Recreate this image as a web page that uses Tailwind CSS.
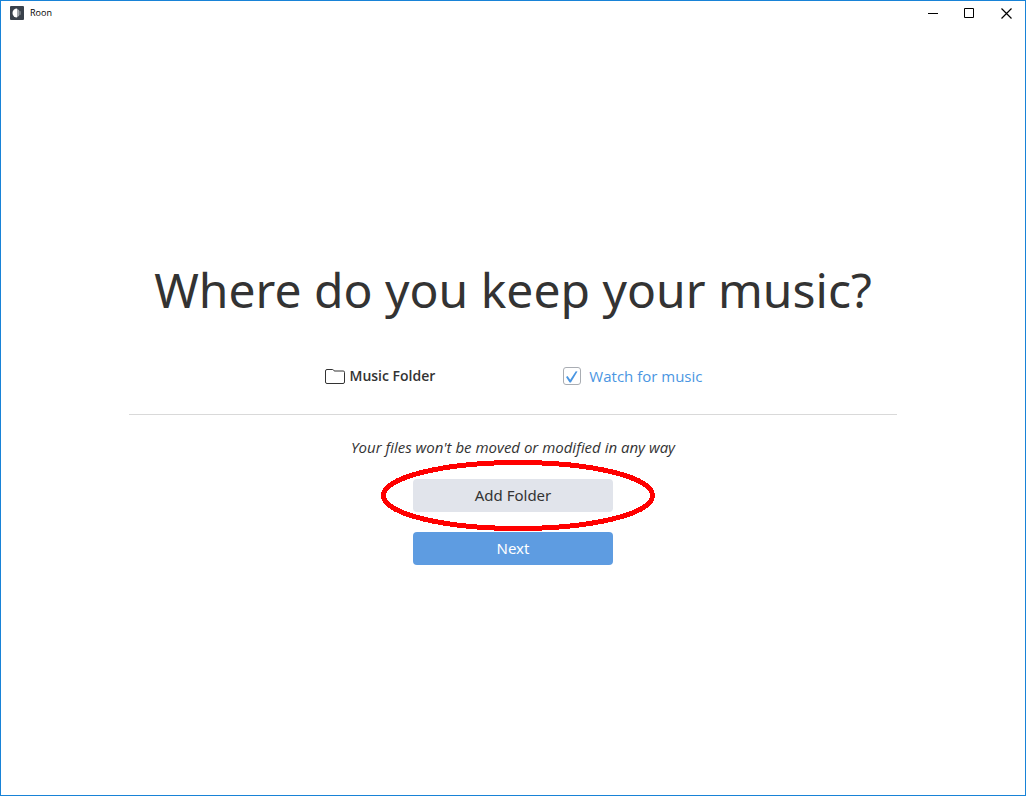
<!DOCTYPE html>
<html lang="en">
  <head>
    <meta charset="UTF-8" />
    <meta name="viewport" content="width=device-width, initial-scale=1.0" />
    <title>Roon</title>

    <script src="https://cdn.jsdelivr.net/npm/@tailwindcss/browser@4"></script>
  </head>
  <body
    class="flex min-h-screen flex-col border border-[#1883d7] bg-white font-['Noto_Sans','Open_Sans',sans-serif] text-[15px] text-[#333333]"
  >
    <!-- Title bar -->
    <header class="flex h-6 items-center justify-between pl-2 text-black">
      <div class="flex items-center gap-[5px]">
        <svg class="size-4" viewBox="0 0 16 16" aria-hidden="true">
          <rect x="1" y="1" width="14" height="14" rx="1" fill="#39414b" />
          <path d="M8 3.5v9a4.5 4.5 0 0 1 0-9z" fill="#ffffff" />
          <path d="M8 3.5v9l1-1v-7zM9 4.5l1 .5v6l-1 .5zM10.5 5.5l1 1v3l-1 1z" fill="#a4a9ae" />
        </svg>
        <span class="font-['Open_Sans',sans-serif] text-[9px]">Roon</span>
      </div>
      <div class="flex h-full">
        <button type="button" aria-label="Minimize" class="flex w-[37px] items-center justify-center hover:bg-gray-200">
          <svg class="size-[11px]" viewBox="0 0 11 11" fill="none" stroke="currentColor">
            <path d="M1 5.5h10" />
          </svg>
        </button>
        <button type="button" aria-label="Maximize" class="flex w-[37px] items-center justify-center hover:bg-gray-200">
          <svg class="size-[11px]" viewBox="0 0 11 11" fill="none" stroke="currentColor">
            <path d="M.5.5h9v9h-9z" />
          </svg>
        </button>
        <button type="button" aria-label="Close" class="flex w-[37px] items-center justify-center hover:bg-red-500">
          <svg class="size-[11px]" viewBox="0 0 11 11" fill="none" stroke="currentColor" stroke-width="1.2">
            <path d="M.5.5l10 10M10.5.5l-10 10" />
          </svg>
        </button>
      </div>
    </header>

    <main class="flex flex-1 flex-col items-center justify-center">
      <h1 class="text-center text-5xl leading-[68px]">Where do you keep your music?</h1>

      <div class="mt-10 flex w-3/4 items-center justify-center gap-32 border-b border-[#d9d9d9] pb-[26px]">
        <div class="flex items-center gap-1">
          <svg class="size-[22px]" viewBox="0 0 22 22" fill="none" stroke="#333333" aria-hidden="true">
            <path d="M1.5 17V6q0-1.500 1.500-1.500h5.500q.8 0 1.200.7l.5.8h9q1.300 0 1.300 1.300V17q0 1.500-1.500 1.500H3q-1.500 0-1.500-1.500z" />
          </svg>
          <span class="font-['Open_Sans',sans-serif] text-sm leading-6 font-semibold">Music Folder</span>
        </div>
        <label for="watch" class="flex items-center gap-2 font-['Open_Sans',sans-serif] leading-6 text-[#4a96e2]">
          <span class="grid size-[18px]">
            <input
              id="watch"
              type="checkbox"
              checked
              class="peer col-start-1 row-start-1 size-[18px] appearance-none rounded-[3px] border border-[#a9adb3] bg-white"
            />
            <svg
              class="pointer-events-none invisible col-start-1 row-start-1 size-[18px] peer-checked:visible"
              viewBox="0 0 18 18"
              aria-hidden="true"
            >
              <path d="M3 10l1.600-1 2.600 3.800 5.600-8.500 1.700.1-6.600 11.100h-1.300z" fill="#4a96e2" />
            </svg>
          </span>
          Watch for music
        </label>
      </div>

      <p class="mt-5 font-['Open_Sans',sans-serif] leading-6 italic">Your files won't be moved or modified in any way</p>

      <div class="relative mt-5">
        <button type="button" class="block h-[33px] w-[200px] rounded-[4px] bg-[#e1e4eb] hover:bg-[#d6dae3]">
          Add Folder
        </button>
        <!-- Highlight ring over the button -->
        <svg
          class="pointer-events-none absolute -top-5 -left-8 h-[72px] w-[275px]"
          viewBox="0 0 275 72"
          fill="none"
          aria-hidden="true"
          shape-rendering="crispEdges"
        >
          <ellipse cx="137" cy="36.500" rx="134.500" ry="33" stroke="#ff0000" stroke-width="5" />
        </svg>
      </div>
      <button type="button" class="mt-5 h-[33px] w-[200px] rounded-[4px] bg-[#5e9ce1] text-white hover:bg-[#4a8dd8]">
        Next
      </button>
    </main>
  </body>
</html>
